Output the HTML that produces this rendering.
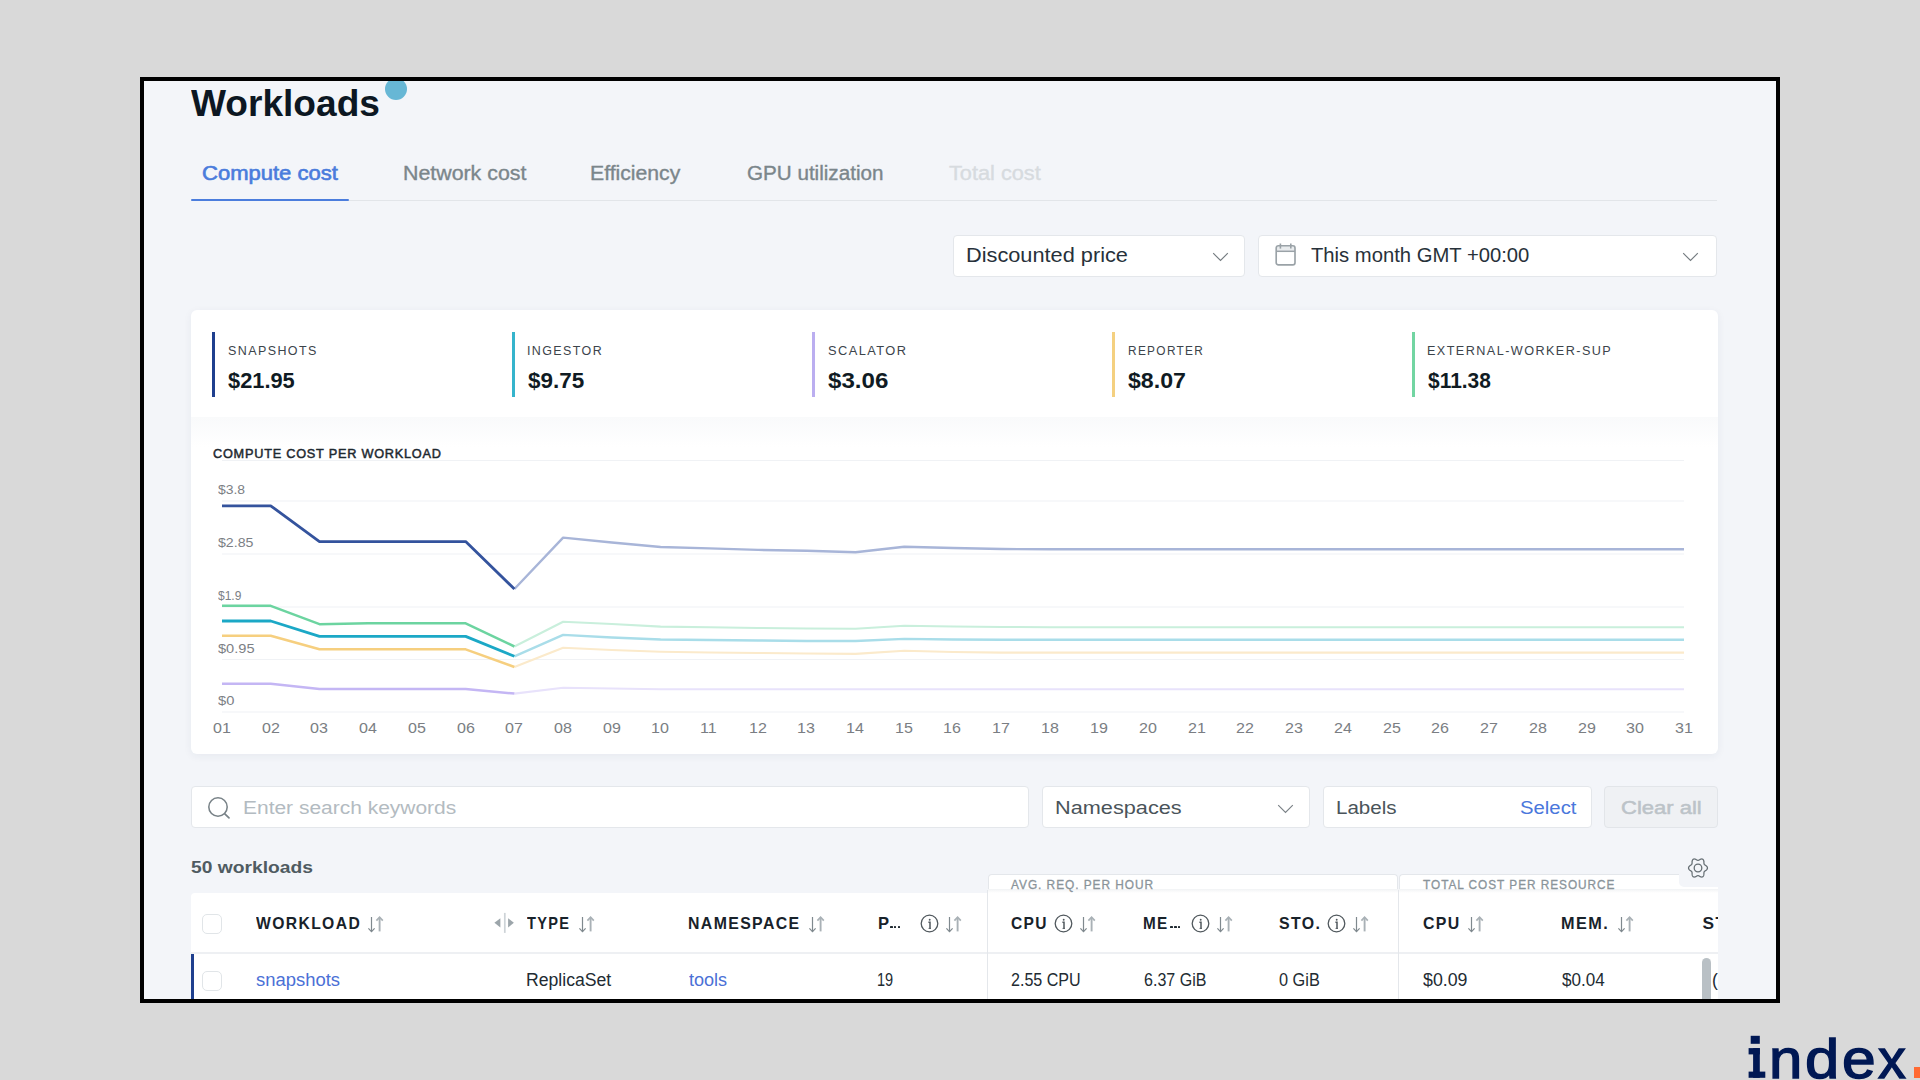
<!DOCTYPE html>
<html><head><meta charset="utf-8">
<style>
html,body{margin:0;padding:0;}
body{width:1920px;height:1080px;background:#d9d9d9;position:relative;overflow:hidden;font-family:"Liberation Sans",sans-serif;}
.frame{position:absolute;left:140px;top:77px;width:1640px;height:926px;box-sizing:border-box;border:4px solid #000;background:#f3f5f9;overflow:hidden;}
.abs{position:absolute;}
.t{position:absolute;white-space:nowrap;line-height:1.105;transform-origin:0 0;}
.box{position:absolute;background:#fff;border:1.3px solid #e4e7eb;border-radius:4px;box-sizing:border-box;}
</style></head><body>
<div class="frame"></div>
<div class="abs" style="left:144px;top:81px;width:1632px;height:918px;overflow:hidden;">
<div class="abs" style="left:-144px;top:-81px;width:1920px;height:1080px;">
<div class="abs" style="left:385px;top:78px;width:22px;height:22px;border-radius:50%;background:#67b7d5;"></div>
<div class="abs" style="left:191px;top:199.5px;width:1526px;height:1.5px;background:#e2e5e9;"></div>
<div class="abs" style="left:191px;top:199.3px;width:157.5px;height:2.2px;background:#4b7ddd;border-radius:1px;"></div>
<div class="box" style="left:953px;top:235px;width:292px;height:42px;"></div>
<div class="box" style="left:1258px;top:235px;width:458.5px;height:42px;"></div>
<svg class="abs" style="left:1211.5px;top:251.8px" width="17" height="10" viewBox="0 0 17 10"><path d="M1.2 1.2 L8.5 8.5 L15.8 1.2" fill="none" stroke="#757c81" stroke-width="1.15"/></svg>
<svg class="abs" style="left:1682.3px;top:251.8px" width="17" height="10" viewBox="0 0 17 10"><path d="M1.2 1.2 L8.5 8.5 L15.8 1.2" fill="none" stroke="#757c81" stroke-width="1.15"/></svg>
<svg class="abs" style="left:1274px;top:243px" width="23" height="24" viewBox="0 0 23 24"><rect x="2.2" y="2.7" width="18.8" height="5.6" fill="#e9ecee"/><rect x="2.2" y="2.7" width="18.8" height="19.2" rx="2.2" fill="none" stroke="#9aa2a7" stroke-width="1.65"/><line x1="2.2" y1="8.3" x2="21" y2="8.3" stroke="#9aa2a7" stroke-width="1.5"/><line x1="6.4" y1="0.5" x2="6.4" y2="5.6" stroke="#9aa2a7" stroke-width="1.6"/><line x1="16.8" y1="0.5" x2="16.8" y2="5.6" stroke="#9aa2a7" stroke-width="1.6"/></svg>
<div class="abs" style="left:190.5px;top:309.5px;width:1527px;height:444px;background:#fff;border-radius:6px;box-shadow:0 2px 8px rgba(30,45,80,0.06);"></div>
<div class="abs" style="left:190.5px;top:417px;width:1527px;height:30px;background:linear-gradient(#f9fafb,#ffffff);"></div>
<div class="abs" style="left:211.8px;top:332px;width:3px;height:64.5px;background:#1f3f8e;"></div>
<div class="abs" style="left:511.9px;top:332px;width:3px;height:64.5px;background:#35b4cc;"></div>
<div class="abs" style="left:811.9px;top:332px;width:3px;height:64.5px;background:#bbaef0;"></div>
<div class="abs" style="left:1112.2px;top:332px;width:3px;height:64.5px;background:#f4d080;"></div>
<div class="abs" style="left:1412.0px;top:332px;width:3px;height:64.5px;background:#72d5a2;"></div>
<svg width="1920" height="1080" viewBox="0 0 1920 1080" style="position:absolute;left:0;top:0">
<line x1="222" y1="460.5" x2="1684" y2="460.5" stroke="#f0f2f5" stroke-width="1.1"/>
<line x1="222" y1="501.0" x2="1684" y2="501.0" stroke="#f0f2f5" stroke-width="1.1"/>
<line x1="222" y1="554.0" x2="1684" y2="554.0" stroke="#f0f2f5" stroke-width="1.1"/>
<line x1="222" y1="607.0" x2="1684" y2="607.0" stroke="#f0f2f5" stroke-width="1.1"/>
<line x1="222" y1="659.5" x2="1684" y2="659.5" stroke="#f0f2f5" stroke-width="1.1"/>
<line x1="222" y1="712.0" x2="1684" y2="712.0" stroke="#f0f2f5" stroke-width="1.1"/>
<polyline points="514.40,693.60 563.13,687.80 611.86,688.50 660.60,689.30 709.33,689.30 758.06,689.30 806.80,689.30 855.53,689.30 904.26,689.30 953.00,689.30 1001.73,689.30 1050.46,689.30 1099.19,689.30 1147.93,689.30 1196.66,689.30 1245.39,689.30 1294.13,689.30 1342.86,689.30 1391.59,689.30 1440.32,689.30 1489.06,689.30 1537.79,689.30 1586.52,689.30 1635.26,689.30 1683.99,689.30" fill="none" stroke="#e8e2fb" stroke-width="2.1" stroke-linejoin="round"/>
<polyline points="222.00,683.80 270.73,683.80 319.47,689.00 368.20,689.00 416.93,689.00 465.66,689.00 514.40,693.60" fill="none" stroke="#c4b6f4" stroke-width="2.5" stroke-linejoin="round"/>
<polyline points="514.40,667.00 563.13,647.70 611.86,650.00 660.60,651.70 709.33,652.50 758.06,653.00 806.80,653.50 855.53,653.90 904.26,650.80 953.00,652.00 1001.73,652.60 1050.46,652.60 1099.19,652.60 1147.93,652.60 1196.66,652.60 1245.39,652.60 1294.13,652.60 1342.86,652.60 1391.59,652.60 1440.32,652.60 1489.06,652.60 1537.79,652.60 1586.52,652.60 1635.26,652.60 1683.99,652.60" fill="none" stroke="#fbeacb" stroke-width="2.1" stroke-linejoin="round"/>
<polyline points="222.00,635.80 270.73,635.80 319.47,649.30 368.20,649.30 416.93,649.30 465.66,649.30 514.40,667.00" fill="none" stroke="#f6cf7f" stroke-width="2.5" stroke-linejoin="round"/>
<polyline points="514.40,656.30 563.13,634.90 611.86,637.50 660.60,639.50 709.33,640.00 758.06,640.50 806.80,641.00 855.53,641.00 904.26,638.90 953.00,639.50 1001.73,639.80 1050.46,639.80 1099.19,639.80 1147.93,639.80 1196.66,639.80 1245.39,639.80 1294.13,639.80 1342.86,639.80 1391.59,639.80 1440.32,639.80 1489.06,639.80 1537.79,639.80 1586.52,639.80 1635.26,639.80 1683.99,639.80" fill="none" stroke="#a9dde9" stroke-width="2.4" stroke-linejoin="round"/>
<polyline points="222.00,621.00 270.73,621.00 319.47,636.40 368.20,636.40 416.93,636.40 465.66,636.40 514.40,656.30" fill="none" stroke="#1ba8c6" stroke-width="2.8" stroke-linejoin="round"/>
<polyline points="514.40,646.50 563.13,621.70 611.86,624.00 660.60,626.60 709.33,627.30 758.06,628.00 806.80,628.50 855.53,628.80 904.26,625.70 953.00,626.50 1001.73,627.00 1050.46,627.20 1099.19,627.20 1147.93,627.20 1196.66,627.20 1245.39,627.20 1294.13,627.20 1342.86,627.20 1391.59,627.20 1440.32,627.20 1489.06,627.20 1537.79,627.20 1586.52,627.20 1635.26,627.20 1683.99,627.20" fill="none" stroke="#c9efdc" stroke-width="2.1" stroke-linejoin="round"/>
<polyline points="222.00,605.80 270.73,605.80 319.47,624.20 368.20,623.30 416.93,623.30 465.66,623.30 514.40,646.50" fill="none" stroke="#6cd4a0" stroke-width="2.5" stroke-linejoin="round"/>
<polyline points="514.40,589.00 563.13,537.60 611.86,542.50 660.60,547.00 709.33,548.40 758.06,549.90 806.80,550.80 855.53,552.30 904.26,546.80 953.00,548.00 1001.73,549.00 1050.46,549.30 1099.19,549.30 1147.93,549.30 1196.66,549.30 1245.39,549.30 1294.13,549.30 1342.86,549.30 1391.59,549.30 1440.32,549.30 1489.06,549.30 1537.79,549.30 1586.52,549.30 1635.26,549.30 1683.99,549.30" fill="none" stroke="#a8b5d8" stroke-width="2.4" stroke-linejoin="round"/>
<polyline points="222.00,505.80 270.73,505.80 319.47,541.60 368.20,541.60 416.93,541.60 465.66,541.60 514.40,589.00" fill="none" stroke="#34539d" stroke-width="2.8" stroke-linejoin="round"/>
</svg>
<div class="box" style="left:191px;top:786px;width:838px;height:42px;"></div>
<svg class="abs" style="left:205px;top:795px" width="28" height="27" viewBox="0 0 28 27"><circle cx="13" cy="12" r="9.2" fill="none" stroke="#788287" stroke-width="1.55"/><line x1="19.8" y1="18.8" x2="24" y2="22.9" stroke="#788287" stroke-width="1.7" stroke-linecap="round"/></svg>
<div class="box" style="left:1041.5px;top:786px;width:268.5px;height:42px;"></div>
<svg class="abs" style="left:1277.3px;top:804.2px" width="17" height="10" viewBox="0 0 17 10"><path d="M1.2 1.2 L8.5 8.5 L15.8 1.2" fill="none" stroke="#7a8186" stroke-width="1.15"/></svg>
<div class="box" style="left:1322.5px;top:786px;width:269px;height:42px;"></div>
<div class="box" style="left:1603.5px;top:786px;width:114px;height:42px;background:#eff1f4;border-color:#e2e5e9;"></div>
<div class="abs" style="left:987.5px;top:873.5px;width:410px;height:30px;background:#fff;border:1.3px solid #e4e7eb;border-bottom:none;border-radius:4px 4px 0 0;box-sizing:border-box;"></div>
<div class="abs" style="left:1398.5px;top:873.5px;width:282px;height:30px;background:#fff;border:1.3px solid #e4e7eb;border-bottom:none;border-right:none;border-radius:4px 0 0 0;box-sizing:border-box;"></div>
<div class="abs" style="left:190.5px;top:893px;width:1527px;height:120px;background:#fff;border-radius:4px 0 0 0;"></div>
<div class="abs" style="left:1680px;top:880px;width:37.5px;height:13px;background:#fff;"></div>
<div class="abs" style="left:1679px;top:850px;width:38.5px;height:37px;background:#f3f5f9;border-radius:0 0 0 5px;"></div>
<div class="abs" style="left:987.5px;top:889px;width:730px;height:4px;background:linear-gradient(#f1f3f5,#fff);"></div>
<svg class="abs" style="left:1686.1px;top:856px" width="24" height="24" viewBox="0 0 24 24"><polygon points="21.45,12.00 21.44,12.18 21.42,12.35 21.38,12.53 21.33,12.70 21.26,12.87 21.18,13.03 21.09,13.19 20.98,13.35 20.87,13.50 20.74,13.65 20.61,13.79 20.47,13.93 20.32,14.06 20.17,14.18 20.02,14.30 19.86,14.41 19.71,14.52 19.56,14.63 19.41,14.73 19.26,14.83 19.12,14.92 18.98,15.02 18.85,15.11 18.73,15.21 18.62,15.30 18.52,15.40 18.42,15.50 18.34,15.60 18.26,15.71 18.19,15.83 18.13,15.94 18.08,16.07 18.04,16.20 18.01,16.34 17.98,16.48 17.96,16.63 17.95,16.79 17.93,16.96 17.92,17.13 17.92,17.31 17.91,17.50 17.90,17.69 17.90,17.88 17.88,18.08 17.87,18.28 17.85,18.48 17.82,18.68 17.79,18.88 17.75,19.08 17.70,19.27 17.65,19.46 17.58,19.65 17.51,19.82 17.43,19.99 17.33,20.15 17.23,20.29 17.12,20.43 16.99,20.55 16.86,20.66 16.73,20.76 16.58,20.84 16.42,20.90 16.26,20.96 16.10,20.99 15.93,21.01 15.75,21.02 15.58,21.02 15.40,21.00 15.22,20.97 15.04,20.92 14.85,20.87 14.67,20.81 14.50,20.74 14.32,20.66 14.15,20.58 13.98,20.49 13.81,20.40 13.65,20.31 13.49,20.23 13.34,20.14 13.19,20.06 13.05,19.98 12.91,19.91 12.77,19.84 12.64,19.79 12.51,19.74 12.38,19.70 12.25,19.67 12.12,19.66 12.00,19.65 11.88,19.66 11.75,19.67 11.62,19.70 11.49,19.74 11.36,19.79 11.23,19.84 11.09,19.91 10.95,19.98 10.81,20.06 10.66,20.14 10.51,20.23 10.35,20.31 10.19,20.40 10.02,20.49 9.85,20.58 9.68,20.66 9.50,20.74 9.33,20.81 9.15,20.87 8.96,20.92 8.78,20.97 8.60,21.00 8.42,21.02 8.25,21.02 8.07,21.01 7.90,20.99 7.74,20.96 7.58,20.90 7.42,20.84 7.28,20.76 7.14,20.66 7.01,20.55 6.88,20.43 6.77,20.29 6.67,20.15 6.57,19.99 6.49,19.82 6.42,19.65 6.35,19.46 6.30,19.27 6.25,19.08 6.21,18.88 6.18,18.68 6.15,18.48 6.13,18.28 6.12,18.08 6.10,17.88 6.10,17.69 6.09,17.50 6.08,17.31 6.08,17.13 6.07,16.96 6.05,16.79 6.04,16.63 6.02,16.48 5.99,16.34 5.96,16.20 5.92,16.07 5.87,15.94 5.81,15.83 5.74,15.71 5.66,15.60 5.58,15.50 5.48,15.40 5.38,15.30 5.27,15.21 5.15,15.11 5.02,15.02 4.88,14.92 4.74,14.83 4.59,14.73 4.44,14.63 4.29,14.52 4.14,14.41 3.98,14.30 3.83,14.18 3.68,14.06 3.53,13.93 3.39,13.79 3.26,13.65 3.13,13.50 3.02,13.35 2.91,13.19 2.82,13.03 2.74,12.87 2.67,12.70 2.62,12.53 2.58,12.35 2.56,12.18 2.55,12.00 2.56,11.82 2.58,11.65 2.62,11.47 2.67,11.30 2.74,11.13 2.82,10.97 2.91,10.81 3.02,10.65 3.13,10.50 3.26,10.35 3.39,10.21 3.53,10.07 3.68,9.94 3.83,9.82 3.98,9.70 4.14,9.59 4.29,9.48 4.44,9.37 4.59,9.27 4.74,9.17 4.88,9.08 5.02,8.98 5.15,8.89 5.27,8.79 5.38,8.70 5.48,8.60 5.58,8.50 5.66,8.40 5.74,8.29 5.81,8.17 5.87,8.06 5.92,7.93 5.96,7.80 5.99,7.66 6.02,7.52 6.04,7.37 6.05,7.21 6.07,7.04 6.08,6.87 6.08,6.69 6.09,6.50 6.10,6.31 6.10,6.12 6.12,5.92 6.13,5.72 6.15,5.52 6.18,5.32 6.21,5.12 6.25,4.92 6.30,4.73 6.35,4.54 6.42,4.35 6.49,4.18 6.57,4.01 6.67,3.85 6.77,3.71 6.88,3.57 7.01,3.45 7.14,3.34 7.27,3.24 7.42,3.16 7.58,3.10 7.74,3.04 7.90,3.01 8.07,2.99 8.25,2.98 8.42,2.98 8.60,3.00 8.78,3.03 8.96,3.08 9.15,3.13 9.33,3.19 9.50,3.26 9.68,3.34 9.85,3.42 10.02,3.51 10.19,3.60 10.35,3.69 10.51,3.77 10.66,3.86 10.81,3.94 10.95,4.02 11.09,4.09 11.23,4.16 11.36,4.21 11.49,4.26 11.62,4.30 11.75,4.33 11.88,4.34 12.00,4.35 12.12,4.34 12.25,4.33 12.38,4.30 12.51,4.26 12.64,4.21 12.77,4.16 12.91,4.09 13.05,4.02 13.19,3.94 13.34,3.86 13.49,3.77 13.65,3.69 13.81,3.60 13.98,3.51 14.15,3.42 14.32,3.34 14.50,3.26 14.67,3.19 14.85,3.13 15.04,3.08 15.22,3.03 15.40,3.00 15.58,2.98 15.75,2.98 15.93,2.99 16.10,3.01 16.26,3.04 16.42,3.10 16.58,3.16 16.73,3.24 16.86,3.34 16.99,3.45 17.12,3.57 17.23,3.71 17.33,3.85 17.43,4.01 17.51,4.18 17.58,4.35 17.65,4.54 17.70,4.73 17.75,4.92 17.79,5.12 17.82,5.32 17.85,5.52 17.87,5.72 17.88,5.92 17.90,6.12 17.90,6.31 17.91,6.50 17.92,6.69 17.92,6.87 17.93,7.04 17.95,7.21 17.96,7.37 17.98,7.52 18.01,7.66 18.04,7.80 18.08,7.93 18.13,8.06 18.19,8.17 18.26,8.29 18.34,8.40 18.42,8.50 18.52,8.60 18.62,8.70 18.73,8.79 18.85,8.89 18.98,8.98 19.12,9.08 19.26,9.17 19.41,9.27 19.56,9.37 19.71,9.48 19.86,9.59 20.02,9.70 20.17,9.82 20.32,9.94 20.47,10.07 20.61,10.21 20.74,10.35 20.87,10.50 20.98,10.65 21.09,10.81 21.18,10.97 21.26,11.13 21.33,11.30 21.38,11.47 21.42,11.65 21.44,11.82 21.45,12.00" fill="none" stroke="#666f74" stroke-width="1.25"/><circle cx="12" cy="12" r="3.8" fill="none" stroke="#666f74" stroke-width="1.3"/></svg>
<div class="abs" style="left:190.5px;top:952.3px;width:1527px;height:1.3px;background:#eef0f3;"></div>
<div class="abs" style="left:987.2px;top:890px;width:1.2px;height:113px;background:#e4e7eb;"></div>
<div class="abs" style="left:1398.2px;top:890px;width:1.2px;height:113px;background:#e4e7eb;"></div>
<div class="abs" style="left:190.5px;top:953.5px;width:3px;height:50px;background:#1f3f8e;"></div>
<div class="abs" style="left:201.5px;top:913.5px;width:20px;height:20px;border:1.5px solid #e1e5e8;border-radius:5px;box-sizing:border-box;background:#fff;"></div>
<div class="abs" style="left:201.5px;top:971.0px;width:20px;height:20px;border:1.5px solid #e1e5e8;border-radius:5px;box-sizing:border-box;background:#fff;"></div>
<div class="abs" style="left:1701.5px;top:957.5px;width:9.5px;height:60px;background:#b9c0c5;border-radius:5px;"></div>
<svg class="abs" style="left:367.3px;top:914.5px" width="18" height="19" viewBox="0 0 18 19"><line x1="4.5" y1="2" x2="4.5" y2="16.6" stroke="#7f898e" stroke-width="1.2"/><path d="M1.4 13.4 L4.5 16.7 L7.6 13.4" fill="none" stroke="#7f898e" stroke-width="1.2"/><line x1="12.6" y1="2.6" x2="12.6" y2="16.4" stroke="#a9b1b6" stroke-width="1.9"/><path d="M9.4 5.6 L12.6 2.2 L15.8 5.6" fill="none" stroke="#a9b1b6" stroke-width="1.7"/></svg>
<svg class="abs" style="left:577.8px;top:914.5px" width="18" height="19" viewBox="0 0 18 19"><line x1="4.5" y1="2" x2="4.5" y2="16.6" stroke="#7f898e" stroke-width="1.2"/><path d="M1.4 13.4 L4.5 16.7 L7.6 13.4" fill="none" stroke="#7f898e" stroke-width="1.2"/><line x1="12.6" y1="2.6" x2="12.6" y2="16.4" stroke="#a9b1b6" stroke-width="1.9"/><path d="M9.4 5.6 L12.6 2.2 L15.8 5.6" fill="none" stroke="#a9b1b6" stroke-width="1.7"/></svg>
<svg class="abs" style="left:808.1px;top:914.5px" width="18" height="19" viewBox="0 0 18 19"><line x1="4.5" y1="2" x2="4.5" y2="16.6" stroke="#7f898e" stroke-width="1.2"/><path d="M1.4 13.4 L4.5 16.7 L7.6 13.4" fill="none" stroke="#7f898e" stroke-width="1.2"/><line x1="12.6" y1="2.6" x2="12.6" y2="16.4" stroke="#a9b1b6" stroke-width="1.9"/><path d="M9.4 5.6 L12.6 2.2 L15.8 5.6" fill="none" stroke="#a9b1b6" stroke-width="1.7"/></svg>
<svg class="abs" style="left:944.9px;top:914.5px" width="18" height="19" viewBox="0 0 18 19"><line x1="4.5" y1="2" x2="4.5" y2="16.6" stroke="#7f898e" stroke-width="1.2"/><path d="M1.4 13.4 L4.5 16.7 L7.6 13.4" fill="none" stroke="#7f898e" stroke-width="1.2"/><line x1="12.6" y1="2.6" x2="12.6" y2="16.4" stroke="#a9b1b6" stroke-width="1.9"/><path d="M9.4 5.6 L12.6 2.2 L15.8 5.6" fill="none" stroke="#a9b1b6" stroke-width="1.7"/></svg>
<svg class="abs" style="left:1079.0px;top:914.5px" width="18" height="19" viewBox="0 0 18 19"><line x1="4.5" y1="2" x2="4.5" y2="16.6" stroke="#7f898e" stroke-width="1.2"/><path d="M1.4 13.4 L4.5 16.7 L7.6 13.4" fill="none" stroke="#7f898e" stroke-width="1.2"/><line x1="12.6" y1="2.6" x2="12.6" y2="16.4" stroke="#a9b1b6" stroke-width="1.9"/><path d="M9.4 5.6 L12.6 2.2 L15.8 5.6" fill="none" stroke="#a9b1b6" stroke-width="1.7"/></svg>
<svg class="abs" style="left:1215.7px;top:914.5px" width="18" height="19" viewBox="0 0 18 19"><line x1="4.5" y1="2" x2="4.5" y2="16.6" stroke="#7f898e" stroke-width="1.2"/><path d="M1.4 13.4 L4.5 16.7 L7.6 13.4" fill="none" stroke="#7f898e" stroke-width="1.2"/><line x1="12.6" y1="2.6" x2="12.6" y2="16.4" stroke="#a9b1b6" stroke-width="1.9"/><path d="M9.4 5.6 L12.6 2.2 L15.8 5.6" fill="none" stroke="#a9b1b6" stroke-width="1.7"/></svg>
<svg class="abs" style="left:1352.4px;top:914.5px" width="18" height="19" viewBox="0 0 18 19"><line x1="4.5" y1="2" x2="4.5" y2="16.6" stroke="#7f898e" stroke-width="1.2"/><path d="M1.4 13.4 L4.5 16.7 L7.6 13.4" fill="none" stroke="#7f898e" stroke-width="1.2"/><line x1="12.6" y1="2.6" x2="12.6" y2="16.4" stroke="#a9b1b6" stroke-width="1.9"/><path d="M9.4 5.6 L12.6 2.2 L15.8 5.6" fill="none" stroke="#a9b1b6" stroke-width="1.7"/></svg>
<svg class="abs" style="left:1467.4px;top:914.5px" width="18" height="19" viewBox="0 0 18 19"><line x1="4.5" y1="2" x2="4.5" y2="16.6" stroke="#7f898e" stroke-width="1.2"/><path d="M1.4 13.4 L4.5 16.7 L7.6 13.4" fill="none" stroke="#7f898e" stroke-width="1.2"/><line x1="12.6" y1="2.6" x2="12.6" y2="16.4" stroke="#a9b1b6" stroke-width="1.9"/><path d="M9.4 5.6 L12.6 2.2 L15.8 5.6" fill="none" stroke="#a9b1b6" stroke-width="1.7"/></svg>
<svg class="abs" style="left:1616.9px;top:914.5px" width="18" height="19" viewBox="0 0 18 19"><line x1="4.5" y1="2" x2="4.5" y2="16.6" stroke="#7f898e" stroke-width="1.2"/><path d="M1.4 13.4 L4.5 16.7 L7.6 13.4" fill="none" stroke="#7f898e" stroke-width="1.2"/><line x1="12.6" y1="2.6" x2="12.6" y2="16.4" stroke="#a9b1b6" stroke-width="1.9"/><path d="M9.4 5.6 L12.6 2.2 L15.8 5.6" fill="none" stroke="#a9b1b6" stroke-width="1.7"/></svg>
<svg class="abs" style="left:919.8px;top:914.4px" width="19" height="19" viewBox="0 0 19 19"><circle cx="9.5" cy="9.5" r="8.3" fill="none" stroke="#50585d" stroke-width="1.3"/><path d="M8.4 8.2 L10 8.2 L10 14.2" fill="none" stroke="#50585d" stroke-width="1.5"/><line x1="8.6" y1="14.4" x2="11" y2="14.4" stroke="#50585d" stroke-width="1"/><circle cx="9.7" cy="5.7" r="0.95" fill="#50585d"/></svg>
<svg class="abs" style="left:1053.5px;top:914.4px" width="19" height="19" viewBox="0 0 19 19"><circle cx="9.5" cy="9.5" r="8.3" fill="none" stroke="#50585d" stroke-width="1.3"/><path d="M8.4 8.2 L10 8.2 L10 14.2" fill="none" stroke="#50585d" stroke-width="1.5"/><line x1="8.6" y1="14.4" x2="11" y2="14.4" stroke="#50585d" stroke-width="1"/><circle cx="9.7" cy="5.7" r="0.95" fill="#50585d"/></svg>
<svg class="abs" style="left:1190.5px;top:914.4px" width="19" height="19" viewBox="0 0 19 19"><circle cx="9.5" cy="9.5" r="8.3" fill="none" stroke="#50585d" stroke-width="1.3"/><path d="M8.4 8.2 L10 8.2 L10 14.2" fill="none" stroke="#50585d" stroke-width="1.5"/><line x1="8.6" y1="14.4" x2="11" y2="14.4" stroke="#50585d" stroke-width="1"/><circle cx="9.7" cy="5.7" r="0.95" fill="#50585d"/></svg>
<svg class="abs" style="left:1326.9px;top:914.4px" width="19" height="19" viewBox="0 0 19 19"><circle cx="9.5" cy="9.5" r="8.3" fill="none" stroke="#50585d" stroke-width="1.3"/><path d="M8.4 8.2 L10 8.2 L10 14.2" fill="none" stroke="#50585d" stroke-width="1.5"/><line x1="8.6" y1="14.4" x2="11" y2="14.4" stroke="#50585d" stroke-width="1"/><circle cx="9.7" cy="5.7" r="0.95" fill="#50585d"/></svg>
<div class="abs" style="left:890.0px;top:925.7px;width:2.6px;height:2.6px;background:#1f2930;border-radius:0.6px;"></div>
<div class="abs" style="left:893.8px;top:925.7px;width:2.6px;height:2.6px;background:#1f2930;border-radius:0.6px;"></div>
<div class="abs" style="left:897.5px;top:925.7px;width:2.6px;height:2.6px;background:#1f2930;border-radius:0.6px;"></div>
<div class="abs" style="left:1170.2px;top:925.7px;width:2.6px;height:2.6px;background:#1f2930;border-radius:0.6px;"></div>
<div class="abs" style="left:1174.0px;top:925.7px;width:2.6px;height:2.6px;background:#1f2930;border-radius:0.6px;"></div>
<div class="abs" style="left:1177.7px;top:925.7px;width:2.6px;height:2.6px;background:#1f2930;border-radius:0.6px;"></div>
<svg class="abs" style="left:493px;top:911px" width="22" height="23" viewBox="0 0 22 23"><path d="M1.4 11.8 L7.4 7.2 L7.4 16.4 Z" fill="#9ca5aa"/><path d="M20.9 11.8 L15.1 7.2 L15.1 16.4 Z" fill="#9ca5aa"/><line x1="11.8" y1="1.9" x2="11.8" y2="21.9" stroke="#cdd3d7" stroke-width="1.7"/></svg>
<div class="t" id="t0" style="left:191.00px;top:82.61px;font-size:37.70px;font-weight:700;color:#0c1722;transform:scaleX(0.9842);">Workloads</div>
<div class="t" id="t1" style="left:201.50px;top:163.31px;font-size:19.50px;font-weight:400;color:#4a7cdc;transform:scaleX(1.1292);-webkit-text-stroke:0.6px #4a7cdc;">Compute cost</div>
<div class="t" id="t2" style="left:402.51px;top:163.31px;font-size:19.50px;font-weight:400;color:#7b868b;transform:scaleX(1.0946);-webkit-text-stroke:0.35px #7b868b;">Network cost</div>
<div class="t" id="t3" style="left:590.41px;top:163.31px;font-size:19.50px;font-weight:400;color:#7b868b;transform:scaleX(1.0869);-webkit-text-stroke:0.35px #7b868b;">Efficiency</div>
<div class="t" id="t4" style="left:747.00px;top:163.31px;font-size:19.50px;font-weight:400;color:#7b868b;transform:scaleX(1.0576);-webkit-text-stroke:0.35px #7b868b;">GPU utilization</div>
<div class="t" id="t5" style="left:949.00px;top:163.31px;font-size:19.50px;font-weight:400;color:#d7dbdf;transform:scaleX(1.1139);-webkit-text-stroke:0.35px #d7dbdf;">Total cost</div>
<div class="t" id="t6" style="left:966.48px;top:244.61px;font-size:19.50px;font-weight:400;color:#27313a;transform:scaleX(1.1151);">Discounted price</div>
<div class="t" id="t7" style="left:1311.40px;top:244.61px;font-size:19.50px;font-weight:400;color:#27313a;transform:scaleX(1.0377);">This month GMT +00:00</div>
<div class="t" id="t8" style="left:228.30px;top:344.01px;font-size:13.40px;font-weight:400;color:#3c444b;letter-spacing:1.50px;transform:scaleX(0.9339);">SNAPSHOTS</div>
<div class="t" id="t9" style="left:228.30px;top:368.80px;font-size:21.60px;font-weight:700;color:#101b23;transform:scaleX(1.0100);">$21.95</div>
<div class="t" id="t10" style="left:527.07px;top:344.01px;font-size:13.40px;font-weight:400;color:#3c444b;letter-spacing:1.50px;transform:scaleX(0.9306);">INGESTOR</div>
<div class="t" id="t11" style="left:528.00px;top:368.80px;font-size:21.60px;font-weight:700;color:#101b23;transform:scaleX(1.0402);">$9.75</div>
<div class="t" id="t12" style="left:828.00px;top:344.01px;font-size:13.40px;font-weight:400;color:#3c444b;letter-spacing:1.50px;transform:scaleX(0.9576);">SCALATOR</div>
<div class="t" id="t13" style="left:828.00px;top:368.80px;font-size:21.60px;font-weight:700;color:#101b23;transform:scaleX(1.1161);">$3.06</div>
<div class="t" id="t14" style="left:1127.52px;top:344.01px;font-size:13.40px;font-weight:400;color:#3c444b;letter-spacing:1.50px;transform:scaleX(0.8847);">REPORTER</div>
<div class="t" id="t15" style="left:1128.40px;top:368.80px;font-size:21.60px;font-weight:700;color:#101b23;transform:scaleX(1.0717);">$8.07</div>
<div class="t" id="t16" style="left:1427.05px;top:344.01px;font-size:13.40px;font-weight:400;color:#3c444b;letter-spacing:1.50px;transform:scaleX(0.9454);">EXTERNAL-WORKER-SUP</div>
<div class="t" id="t17" style="left:1428.00px;top:368.80px;font-size:21.60px;font-weight:700;color:#101b23;transform:scaleX(0.9700);">$11.38</div>
<div class="t" id="t18" style="left:212.90px;top:446.51px;font-size:13.40px;font-weight:400;color:#1e2930;letter-spacing:0.80px;transform:scaleX(0.9501);-webkit-text-stroke:0.5px #1e2930;">COMPUTE COST PER WORKLOAD</div>
<div class="t" id="t19" style="left:217.50px;top:483.40px;font-size:13.30px;font-weight:400;color:#7c8085;transform:scaleX(1.0477);">$3.8</div>
<div class="t" id="t20" style="left:217.50px;top:536.15px;font-size:13.30px;font-weight:400;color:#7c8085;transform:scaleX(1.0645);">$2.85</div>
<div class="t" id="t21" style="left:217.50px;top:588.90px;font-size:13.30px;font-weight:400;color:#7c8085;transform:scaleX(0.9025);">$1.9</div>
<div class="t" id="t22" style="left:217.50px;top:641.65px;font-size:13.30px;font-weight:400;color:#7c8085;transform:scaleX(1.0979);">$0.95</div>
<div class="t" id="t23" style="left:217.50px;top:694.40px;font-size:13.30px;font-weight:400;color:#7c8085;transform:scaleX(1.1045);">$0</div>
<div class="t" id="t24" style="left:213.02px;top:720.51px;font-size:14.20px;font-weight:400;color:#7a7e83;transform:scaleX(1.1300);">01</div>
<div class="t" id="t25" style="left:261.75px;top:720.51px;font-size:14.20px;font-weight:400;color:#7a7e83;transform:scaleX(1.1300);">02</div>
<div class="t" id="t26" style="left:310.49px;top:720.51px;font-size:14.20px;font-weight:400;color:#7a7e83;transform:scaleX(1.1300);">03</div>
<div class="t" id="t27" style="left:359.22px;top:720.51px;font-size:14.20px;font-weight:400;color:#7a7e83;transform:scaleX(1.1300);">04</div>
<div class="t" id="t28" style="left:407.95px;top:720.51px;font-size:14.20px;font-weight:400;color:#7a7e83;transform:scaleX(1.1300);">05</div>
<div class="t" id="t29" style="left:456.69px;top:720.51px;font-size:14.20px;font-weight:400;color:#7a7e83;transform:scaleX(1.1300);">06</div>
<div class="t" id="t30" style="left:505.42px;top:720.51px;font-size:14.20px;font-weight:400;color:#7a7e83;transform:scaleX(1.1300);">07</div>
<div class="t" id="t31" style="left:554.15px;top:720.51px;font-size:14.20px;font-weight:400;color:#7a7e83;transform:scaleX(1.1300);">08</div>
<div class="t" id="t32" style="left:602.89px;top:720.51px;font-size:14.20px;font-weight:400;color:#7a7e83;transform:scaleX(1.1300);">09</div>
<div class="t" id="t33" style="left:651.05px;top:720.51px;font-size:14.20px;font-weight:400;color:#7a7e83;transform:scaleX(1.1300);">10</div>
<div class="t" id="t34" style="left:700.38px;top:720.51px;font-size:14.20px;font-weight:400;color:#7a7e83;transform:scaleX(1.1300);">11</div>
<div class="t" id="t35" style="left:748.52px;top:720.51px;font-size:14.20px;font-weight:400;color:#7a7e83;transform:scaleX(1.1300);">12</div>
<div class="t" id="t36" style="left:797.25px;top:720.51px;font-size:14.20px;font-weight:400;color:#7a7e83;transform:scaleX(1.1300);">13</div>
<div class="t" id="t37" style="left:845.99px;top:720.51px;font-size:14.20px;font-weight:400;color:#7a7e83;transform:scaleX(1.1300);">14</div>
<div class="t" id="t38" style="left:894.72px;top:720.51px;font-size:14.20px;font-weight:400;color:#7a7e83;transform:scaleX(1.1300);">15</div>
<div class="t" id="t39" style="left:943.45px;top:720.51px;font-size:14.20px;font-weight:400;color:#7a7e83;transform:scaleX(1.1300);">16</div>
<div class="t" id="t40" style="left:992.18px;top:720.51px;font-size:14.20px;font-weight:400;color:#7a7e83;transform:scaleX(1.1300);">17</div>
<div class="t" id="t41" style="left:1040.92px;top:720.51px;font-size:14.20px;font-weight:400;color:#7a7e83;transform:scaleX(1.1300);">18</div>
<div class="t" id="t42" style="left:1089.65px;top:720.51px;font-size:14.20px;font-weight:400;color:#7a7e83;transform:scaleX(1.1300);">19</div>
<div class="t" id="t43" style="left:1138.95px;top:720.51px;font-size:14.20px;font-weight:400;color:#7a7e83;transform:scaleX(1.1300);">20</div>
<div class="t" id="t44" style="left:1187.68px;top:720.51px;font-size:14.20px;font-weight:400;color:#7a7e83;transform:scaleX(1.1300);">21</div>
<div class="t" id="t45" style="left:1236.41px;top:720.51px;font-size:14.20px;font-weight:400;color:#7a7e83;transform:scaleX(1.1300);">22</div>
<div class="t" id="t46" style="left:1285.15px;top:720.51px;font-size:14.20px;font-weight:400;color:#7a7e83;transform:scaleX(1.1300);">23</div>
<div class="t" id="t47" style="left:1333.88px;top:720.51px;font-size:14.20px;font-weight:400;color:#7a7e83;transform:scaleX(1.1300);">24</div>
<div class="t" id="t48" style="left:1382.61px;top:720.51px;font-size:14.20px;font-weight:400;color:#7a7e83;transform:scaleX(1.1300);">25</div>
<div class="t" id="t49" style="left:1431.35px;top:720.51px;font-size:14.20px;font-weight:400;color:#7a7e83;transform:scaleX(1.1300);">26</div>
<div class="t" id="t50" style="left:1480.08px;top:720.51px;font-size:14.20px;font-weight:400;color:#7a7e83;transform:scaleX(1.1300);">27</div>
<div class="t" id="t51" style="left:1528.81px;top:720.51px;font-size:14.20px;font-weight:400;color:#7a7e83;transform:scaleX(1.1300);">28</div>
<div class="t" id="t52" style="left:1577.55px;top:720.51px;font-size:14.20px;font-weight:400;color:#7a7e83;transform:scaleX(1.1300);">29</div>
<div class="t" id="t53" style="left:1626.28px;top:720.51px;font-size:14.20px;font-weight:400;color:#7a7e83;transform:scaleX(1.1300);">30</div>
<div class="t" id="t54" style="left:1675.01px;top:720.51px;font-size:14.20px;font-weight:400;color:#7a7e83;transform:scaleX(1.1300);">31</div>
<div class="t" id="t55" style="left:242.88px;top:797.80px;font-size:18.70px;font-weight:400;color:#b3bbc1;transform:scaleX(1.1217);">Enter search keywords</div>
<div class="t" id="t56" style="left:1055.04px;top:797.80px;font-size:18.70px;font-weight:400;color:#4a545a;transform:scaleX(1.1614);">Namespaces</div>
<div class="t" id="t57" style="left:1336.20px;top:797.80px;font-size:18.70px;font-weight:400;color:#4a545a;transform:scaleX(1.1001);">Labels</div>
<div class="t" id="t58" style="left:1520.30px;top:797.80px;font-size:18.70px;font-weight:400;color:#4a77dc;transform:scaleX(1.0863);">Select</div>
<div class="t" id="t59" style="left:1620.60px;top:797.80px;font-size:18.70px;font-weight:400;color:#bcc3c8;transform:scaleX(1.1782);-webkit-text-stroke:0.5px #bcc3c8;">Clear all</div>
<div class="t" id="t60" style="left:191.20px;top:858.31px;font-size:17.20px;font-weight:700;color:#4f5b61;transform:scaleX(1.1196);">50 workloads</div>
<div class="t" id="t61" style="left:1010.50px;top:879.30px;font-size:12.40px;font-weight:400;color:#8a949a;letter-spacing:1.00px;transform:scaleX(0.9587);-webkit-text-stroke:0.3px #8a949a;">AVG. REQ. PER HOUR</div>
<div class="t" id="t62" style="left:1422.60px;top:879.30px;font-size:12.40px;font-weight:400;color:#8a949a;letter-spacing:1.00px;transform:scaleX(0.9549);-webkit-text-stroke:0.3px #8a949a;">TOTAL COST PER RESOURCE</div>
<div class="t" id="t63" style="left:256.00px;top:913.51px;font-size:17.30px;font-weight:700;color:#18222a;letter-spacing:1.50px;transform:scaleX(0.9086);">WORKLOAD</div>
<div class="t" id="t64" style="left:526.80px;top:913.51px;font-size:17.30px;font-weight:700;color:#18222a;letter-spacing:1.50px;transform:scaleX(0.8430);">TYPE</div>
<div class="t" id="t65" style="left:688.38px;top:913.51px;font-size:17.30px;font-weight:700;color:#18222a;letter-spacing:1.50px;transform:scaleX(0.9171);">NAMESPACE</div>
<div class="t" id="t66" style="left:877.64px;top:913.51px;font-size:17.30px;font-weight:700;color:#18222a;letter-spacing:1.50px;transform:scaleX(0.9600);">P</div>
<div class="t" id="t67" style="left:1010.50px;top:913.51px;font-size:17.30px;font-weight:700;color:#18222a;letter-spacing:1.50px;transform:scaleX(0.8999);">CPU</div>
<div class="t" id="t68" style="left:1143.32px;top:913.51px;font-size:17.30px;font-weight:700;color:#18222a;letter-spacing:1.50px;transform:scaleX(0.8843);">ME</div>
<div class="t" id="t69" style="left:1278.80px;top:913.51px;font-size:17.30px;font-weight:700;color:#18222a;letter-spacing:1.50px;transform:scaleX(0.9197);">STO.</div>
<div class="t" id="t70" style="left:1422.60px;top:913.51px;font-size:17.30px;font-weight:700;color:#18222a;letter-spacing:1.50px;transform:scaleX(0.9204);">CPU</div>
<div class="t" id="t71" style="left:1561.06px;top:913.51px;font-size:17.30px;font-weight:700;color:#18222a;letter-spacing:1.50px;transform:scaleX(0.9411);">MEM.</div>
<div class="t" id="t72" style="left:1702.60px;top:913.51px;font-size:17.30px;font-weight:700;color:#18222a;letter-spacing:1.50px;">ST</div>
<div class="t" id="t73" style="left:256.00px;top:970.81px;font-size:17.50px;font-weight:400;color:#4a70d6;transform:scaleX(1.0534);">snapshots</div>
<div class="t" id="t74" style="left:525.79px;top:970.81px;font-size:17.50px;font-weight:400;color:#222b32;transform:scaleX(1.0076);">ReplicaSet</div>
<div class="t" id="t75" style="left:689.30px;top:970.81px;font-size:17.50px;font-weight:400;color:#4a70d6;transform:scaleX(1.0318);">tools</div>
<div class="t" id="t76" style="left:877.47px;top:970.81px;font-size:17.50px;font-weight:400;color:#222b32;transform:scaleX(0.8290);">19</div>
<div class="t" id="t77" style="left:1010.50px;top:970.81px;font-size:17.50px;font-weight:400;color:#222b32;transform:scaleX(0.9185);">2.55 CPU</div>
<div class="t" id="t78" style="left:1144.00px;top:970.81px;font-size:17.50px;font-weight:400;color:#222b32;transform:scaleX(0.9166);">6.37 GiB</div>
<div class="t" id="t79" style="left:1278.80px;top:970.81px;font-size:17.50px;font-weight:400;color:#222b32;transform:scaleX(0.9328);">0 GiB</div>
<div class="t" id="t80" style="left:1422.60px;top:970.81px;font-size:17.50px;font-weight:400;color:#222b32;transform:scaleX(1.0149);">$0.09</div>
<div class="t" id="t81" style="left:1562.00px;top:970.81px;font-size:17.50px;font-weight:400;color:#222b32;transform:scaleX(0.9759);">$0.04</div>
<div class="t" id="t82" style="left:1712.00px;top:970.81px;font-size:17.50px;font-weight:400;color:#222b32;">(</div>
<div class="abs" style="left:1717.5px;top:888px;width:60px;height:120px;background:#f3f5f9;"></div>
</div></div>
<div class="abs" style="left:1913.8px;top:1067.4px;width:9px;height:10.5px;background:#ff6a33;"></div><svg class="abs" style="left:0;top:0" width="1920" height="1080"><g fill="#001854"><rect x="1750.7" y="1035.8" width="9.1" height="8"/><rect x="1753.1" y="1048.1" width="6.7" height="29.7"/><rect x="1748.6" y="1048.1" width="11.2" height="6.3"/><rect x="1748.6" y="1071.6" width="16.7" height="6.2"/></g></svg><div class="t" id="t83" style="left:1769.10px;top:1027.81px;font-size:56.00px;font-weight:400;color:#001854;transform:scaleX(1.0680);-webkit-text-stroke:1.4px #001854;">n</div><div class="t" id="t84" style="left:1804.50px;top:1027.81px;font-size:56.00px;font-weight:400;color:#001854;transform:scaleX(1.1000);-webkit-text-stroke:1.4px #001854;">d</div><div class="t" id="t85" style="left:1841.54px;top:1027.81px;font-size:56.00px;font-weight:400;color:#001854;transform:scaleX(1.0815);-webkit-text-stroke:1.4px #001854;">e</div><div class="t" id="t86" style="left:1878.00px;top:1027.81px;font-size:56.00px;font-weight:400;color:#001854;transform:scaleX(0.9929);-webkit-text-stroke:1.4px #001854;">x</div>
</body></html>
